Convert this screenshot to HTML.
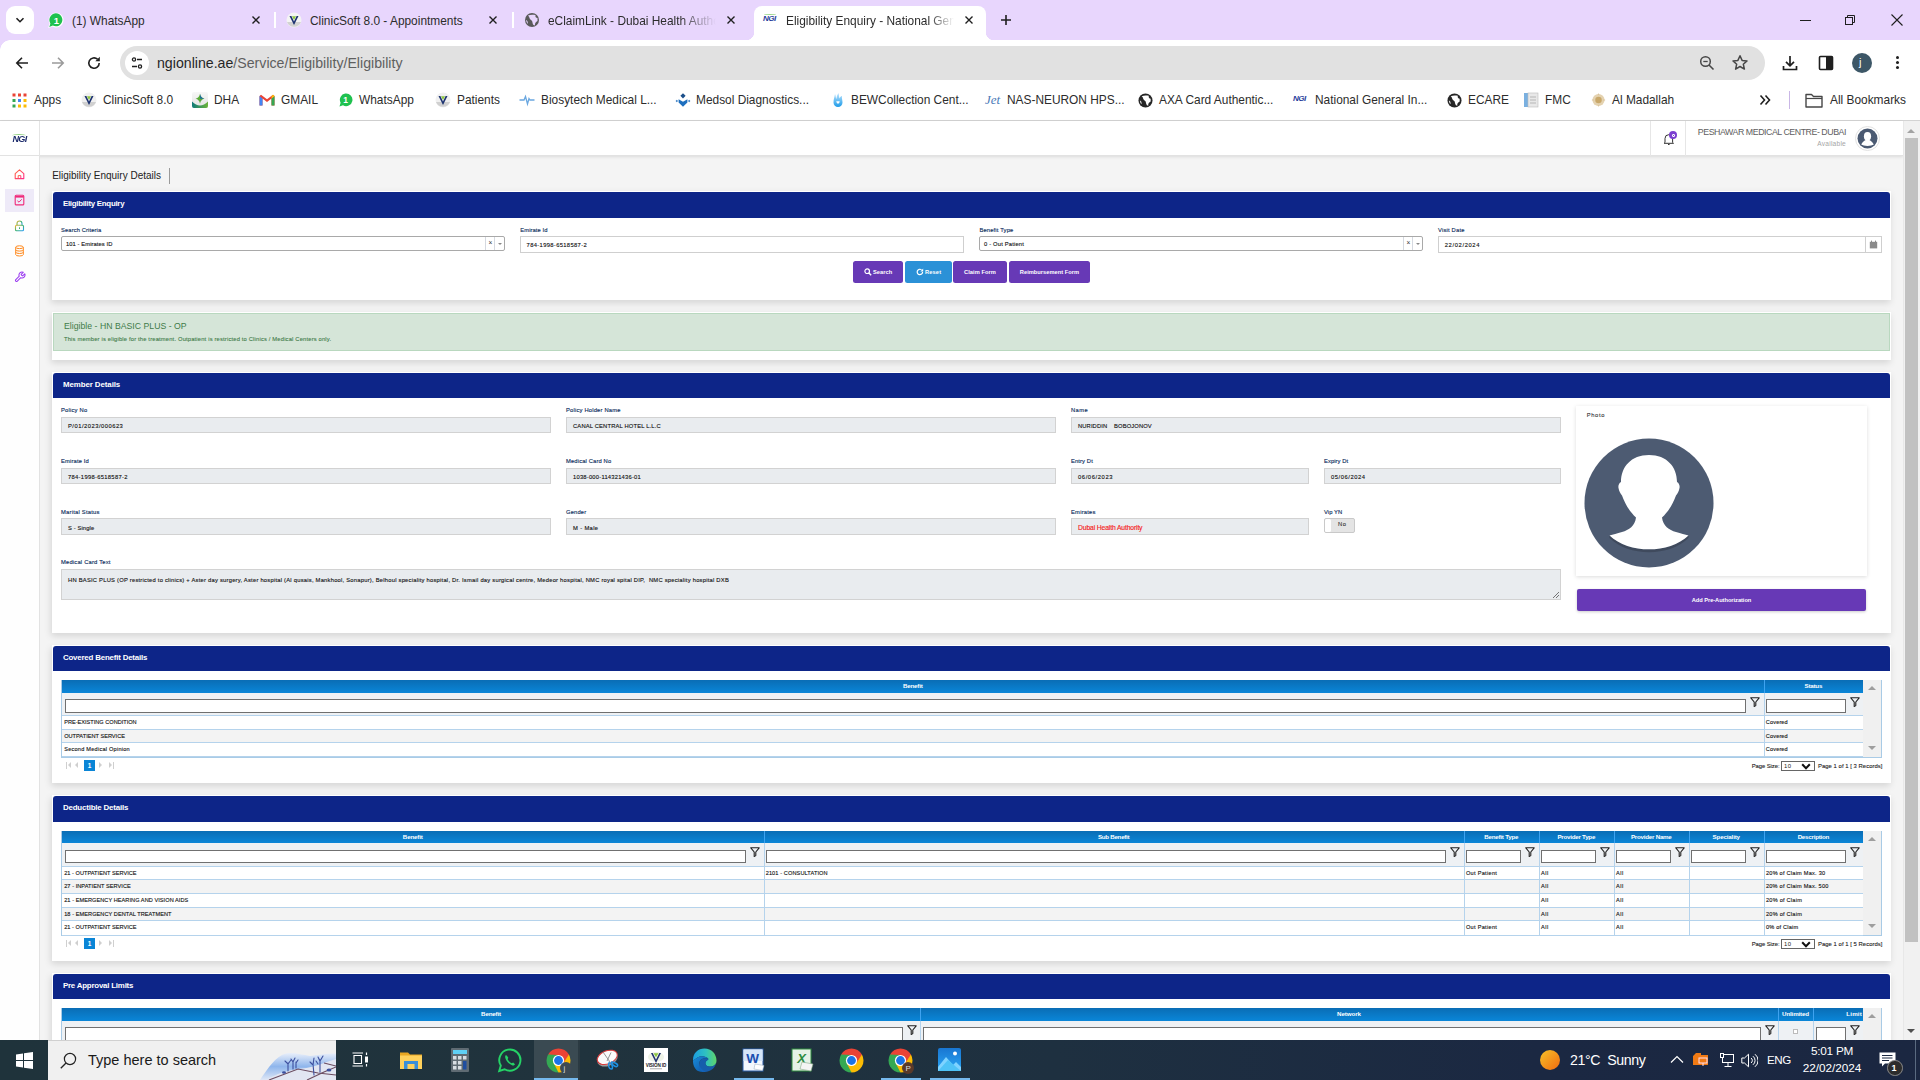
<!DOCTYPE html>
<html><head><meta charset="utf-8">
<style>
*{box-sizing:border-box;margin:0;padding:0}
html,body{width:1920px;height:1080px;overflow:hidden;background:#fff;font-family:"Liberation Sans",sans-serif;position:relative}
.a{position:absolute}
.t{position:absolute;white-space:nowrap;line-height:1}
.bmt{top:55px;font-size:11.9px;color:#2c2c2c}
/* browser chrome */
#tabbar{left:0;top:0;width:1920px;height:40px;background:#e8d6fd}
#toolbar{left:0;top:40px;width:1920px;height:80px;background:#fff}
#sep{left:0;top:120px;width:1920px;height:1px;background:#d3d3d3}
/* app */
#app{left:0;top:121px;width:1903px;height:919px;background:#f4f4f4;overflow:hidden}
#vscroll{left:1903px;top:121px;width:17px;height:919px;background:#f1f1f1}
#taskbar{left:0;top:1040px;width:1920px;height:40px;background:linear-gradient(90deg,#1f2d34 0%,#1f2c38 50%,#1c2640 100%)}
</style></head><body>
<div id="tabbar" class="a">
  <!-- dropdown -->
  <div class="a" style="left:6px;top:6px;width:28px;height:28px;border-radius:9px;background:#fff"></div>
  <svg class="a" style="left:14px;top:14px" width="12" height="12" viewBox="0 0 12 12"><path d="M2.5 4.2 L6 7.7 L9.5 4.2" fill="none" stroke="#1f1f1f" stroke-width="1.6"/></svg>
  <!-- tab 1 -->
  <svg class="a" style="left:47px;top:12px" width="17" height="17" viewBox="0 0 17 17"><path d="M1.2 16 L2.6 11.6 A7.4 7.4 0 1 1 5.6 14.6 Z" fill="#fff"/><path d="M2.3 14.9 L3.4 11.4 A6.5 6.5 0 1 1 5.8 13.6 Z" fill="#1fc14f"/><text x="9.4" y="11.8" font-family="Liberation Sans" font-weight="bold" font-size="9.5" fill="#fff" text-anchor="middle">1</text></svg>
  <div class="t" style="left:72px;top:16px;font-size:11.9px;color:#2c2c2c">(1) WhatsApp</div>
  <svg class="a" style="left:251px;top:15px" width="10" height="10" viewBox="0 0 10 10"><path d="M1.5 1.5 L8.5 8.5 M8.5 1.5 L1.5 8.5" stroke="#1f1f1f" stroke-width="1.4"/></svg>
  <div class="a" style="left:274px;top:12px;width:2px;height:16px;background:#fff"></div>
  <!-- tab 2 -->
  <svg class="a" style="left:286px;top:12px" width="16" height="16" viewBox="0 0 16 16"><circle cx="8" cy="8" r="7.5" fill="#f4f4f4"/><path d="M1 10 A7.5 7.5 0 0 0 15 10 Z" fill="#bbb" opacity=".6"/><path d="M3.5 4 L8 13 L12.5 4 L10.6 4 L8 9.5 L5.4 4 Z" fill="#1d3370"/><path d="M6 4.2 L10 4.2 L8 8 Z" fill="#8dc63f"/></svg>
  <div class="t" style="left:310px;top:16px;font-size:11.9px;color:#2c2c2c">ClinicSoft 8.0 - Appointments</div>
  <svg class="a" style="left:488px;top:15px" width="10" height="10" viewBox="0 0 10 10"><path d="M1.5 1.5 L8.5 8.5 M8.5 1.5 L1.5 8.5" stroke="#1f1f1f" stroke-width="1.4"/></svg>
  <div class="a" style="left:512px;top:12px;width:2px;height:16px;background:#fff"></div>
  <!-- tab 3 -->
  <svg class="a" style="left:524px;top:12px" width="16" height="16" viewBox="0 0 16 16"><circle cx="8" cy="8" r="7" fill="#5a5a5a"/><path d="M4 3.5 C6 5 5 7 7 8 C9 9 8 11 9.5 13 L11 13.5 C10.5 11 12 10 13.5 9 L13.5 6 C12 6 11 5 11.5 3 C9 2.5 6 2.5 4 3.5 Z M2 8 C3.5 8.5 4 10 3.8 12 A7 7 0 0 1 2 8 Z" fill="#e8d6fd"/></svg>
  <div class="t" style="left:548px;top:16px;font-size:11.9px;color:#2c2c2c;width:168px;overflow:hidden;-webkit-mask-image:linear-gradient(90deg,#000 78%,transparent 100%)">eClaimLink - Dubai Health Authority</div>
  <svg class="a" style="left:726px;top:15px" width="10" height="10" viewBox="0 0 10 10"><path d="M1.5 1.5 L8.5 8.5 M8.5 1.5 L1.5 8.5" stroke="#1f1f1f" stroke-width="1.4"/></svg>
  <!-- active tab -->
  <div class="a" style="left:754px;top:6px;width:232px;height:34px;background:#fff;border-radius:8px 8px 0 0"></div>
  <div class="a" style="left:746px;top:32px;width:8px;height:8px;background:radial-gradient(circle at 0 0,transparent 8px,#fff 8.5px)"></div>
  <div class="a" style="left:986px;top:32px;width:8px;height:8px;background:radial-gradient(circle at 100% 0,transparent 8px,#fff 8.5px)"></div>
  <div class="t" style="left:763px;top:15px;font-size:8px;font-weight:bold;font-style:italic;color:#1e3a9a;letter-spacing:-0.5px">NGI</div>
  <div class="a" style="left:764px;top:14px;width:12px;height:2px;border-top:1px solid #9fd98f;border-radius:50% 50% 0 0"></div>
  <div class="t" style="left:786px;top:16px;font-size:11.9px;color:#2c2c2c;width:168px;overflow:hidden;-webkit-mask-image:linear-gradient(90deg,#000 85%,transparent 100%)">Eligibility Enquiry - National General Insurance</div>
  <svg class="a" style="left:964px;top:15px" width="10" height="10" viewBox="0 0 10 10"><path d="M1.5 1.5 L8.5 8.5 M8.5 1.5 L1.5 8.5" stroke="#1f1f1f" stroke-width="1.4"/></svg>
  <!-- new tab -->
  <svg class="a" style="left:1000px;top:14px" width="12" height="12" viewBox="0 0 12 12"><path d="M6 1 V11 M1 6 H11" stroke="#1f1f1f" stroke-width="1.6"/></svg>
  <!-- window controls -->
  <div class="a" style="left:1800px;top:20px;width:11px;height:1px;background:#1f1f1f"></div>
  <svg class="a" style="left:1844px;top:14px" width="12" height="12" viewBox="0 0 12 12"><rect x="1.5" y="3.5" width="7" height="7" fill="none" stroke="#1f1f1f" stroke-width="1"/><path d="M3.5 3.5 V1.5 H10.5 V8.5 H8.5" fill="none" stroke="#1f1f1f" stroke-width="1"/></svg>
  <svg class="a" style="left:1891px;top:14px" width="12" height="12" viewBox="0 0 12 12"><path d="M0.5 0.5 L11.5 11.5 M11.5 0.5 L0.5 11.5" stroke="#1f1f1f" stroke-width="1.1"/></svg>
</div>
<div id="toolbar" class="a">
  <div class="a" style="left:0;top:0;width:10px;height:10px;background:radial-gradient(circle at 100% 100%,#fff 9.5px,#e8d6fd 10px)"></div>
  <svg class="a" style="left:14px;top:15px" width="16" height="16" viewBox="0 0 16 16"><path d="M14 8 H3 M8 2.8 L2.8 8 L8 13.2" fill="none" stroke="#1f1f1f" stroke-width="1.6"/></svg>
  <svg class="a" style="left:50px;top:15px" width="16" height="16" viewBox="0 0 16 16"><path d="M2 8 H13 M8 2.8 L13.2 8 L8 13.2" fill="none" stroke="#9b9b9b" stroke-width="1.6"/></svg>
  <svg class="a" style="left:86px;top:15px" width="16" height="16" viewBox="0 0 16 16"><path d="M13.2 8 A5.2 5.2 0 1 1 11.5 4.2" fill="none" stroke="#1f1f1f" stroke-width="1.6"/><path d="M13.8 1.8 V6.3 H9.3 Z" fill="#1f1f1f"/></svg>
  <!-- omnibox -->
  <div class="a" style="left:120px;top:6px;width:1645px;height:34px;border-radius:17px;background:#e1e1e1"></div>
  <div class="a" style="left:125px;top:11px;width:24px;height:24px;border-radius:50%;background:#fff"></div>
  <svg class="a" style="left:129px;top:15px" width="16" height="16" viewBox="0 0 16 16"><circle cx="5" cy="4.5" r="1.6" fill="none" stroke="#1f1f1f" stroke-width="1.3"/><path d="M8 4.5 H13" stroke="#1f1f1f" stroke-width="1.5"/><path d="M3 11.5 H8" stroke="#1f1f1f" stroke-width="1.5"/><circle cx="11" cy="11.5" r="1.6" fill="none" stroke="#1f1f1f" stroke-width="1.3"/></svg>
  <div class="t" style="left:157px;top:16px;font-size:14.16px;color:#262626">ngionline.ae<span style="color:#5f5f5f">/Service/Eligibility/Eligibility</span></div>
  <svg class="a" style="left:1699px;top:15px" width="16" height="16" viewBox="0 0 16 16"><circle cx="6.5" cy="6.5" r="4.8" fill="none" stroke="#474747" stroke-width="1.5"/><path d="M10 10 L14.5 14.5" stroke="#474747" stroke-width="1.6"/><path d="M4.3 6.5 H8.7" stroke="#474747" stroke-width="1.3"/></svg>
  <svg class="a" style="left:1731px;top:14px" width="18" height="18" viewBox="0 0 18 18"><path d="M9 1.8 L11.1 6.4 L16 6.9 L12.3 10.2 L13.4 15.1 L9 12.5 L4.6 15.1 L5.7 10.2 L2 6.9 L6.9 6.4 Z" fill="none" stroke="#474747" stroke-width="1.5" stroke-linejoin="round"/></svg>
  <svg class="a" style="left:1781px;top:14px" width="18" height="18" viewBox="0 0 18 18"><path d="M9 2 V11.5 M5 7.8 L9 11.8 L13 7.8" fill="none" stroke="#1f1f1f" stroke-width="1.7"/><path d="M2.5 12 V15.5 H15.5 V12" fill="none" stroke="#1f1f1f" stroke-width="1.7"/></svg>
  <svg class="a" style="left:1818px;top:15px" width="16" height="16" viewBox="0 0 16 16"><rect x="1.5" y="1.5" width="13" height="13" rx="1" fill="none" stroke="#1f1f1f" stroke-width="1.6"/><rect x="8" y="1.5" width="6.5" height="13" fill="#1f1f1f"/></svg>
  <div class="a" style="left:1852px;top:13px;width:20px;height:20px;border-radius:50%;background:#3d5767"></div>
  <div class="t" style="left:1859px;top:17px;font-size:11px;color:#fff">j</div>
  <div class="a" style="left:1896px;top:16px;width:3px;height:3px;border-radius:50%;background:#1f1f1f;box-shadow:0 5px 0 #1f1f1f,0 10px 0 #1f1f1f"></div>
  <!-- bookmarks -->
  <svg class="a" style="left:12px;top:53px" width="15" height="15" viewBox="0 0 15 15"><g>
   <rect x="0.5" y="0.5" width="3" height="3" fill="#ea4335"/><rect x="6" y="0.5" width="3" height="3" fill="#ea4335"/><rect x="11.5" y="0.5" width="3" height="3" fill="#ea4335"/>
   <rect x="0.5" y="6" width="3" height="3" fill="#34a853"/><rect x="6" y="6" width="3" height="3" fill="#4285f4"/><rect x="11.5" y="6" width="3" height="3" fill="#fbbc05"/>
   <rect x="0.5" y="11.5" width="3" height="3" fill="#34a853"/><rect x="6" y="11.5" width="3" height="3" fill="#fbbc05"/><rect x="11.5" y="11.5" width="3" height="3" fill="#fbbc05"/></g></svg>
  <div class="t bmt" style="left:34px">Apps</div>
  <svg class="a" style="left:81px;top:52px" width="16" height="16" viewBox="0 0 16 16"><circle cx="8" cy="8" r="7.5" fill="#f0f0f0"/><path d="M1 10 A7.5 7.5 0 0 0 15 10 Z" fill="#bbb" opacity=".6"/><path d="M3.5 4 L8 13 L12.5 4 L10.6 4 L8 9.5 L5.4 4 Z" fill="#1d3370"/><path d="M6 4.2 L10 4.2 L8 8 Z" fill="#8dc63f"/></svg>
  <div class="t bmt" style="left:103px">ClinicSoft 8.0</div>
  <svg class="a" style="left:192px;top:52px" width="16" height="16" viewBox="0 0 16 16"><defs><linearGradient id="dhb" x1="0" y1="0" x2="0" y2="1"><stop offset="0" stop-color="#f7f7f7"/><stop offset="1" stop-color="#e2e2e2"/></linearGradient><linearGradient id="dha" x1="0" y1="0" x2="1" y2="0"><stop offset="0" stop-color="#0f7a7a"/><stop offset="1" stop-color="#6db43a"/></linearGradient></defs><rect x="0" y="0" width="16" height="16" rx="2" fill="url(#dhb)"/><path d="M0 9.5 Q8 17.5 16 9.5 V14 Q16 16 14 16 H2 Q0 16 0 14 Z" fill="url(#dha)"/><path d="M8 1.8 Q8.6 5.6 12.4 6.8 Q8.6 7.6 8 11.8 Q7.4 7.6 3.6 6.8 Q7.4 5.6 8 1.8 Z" fill="#5aaa3a"/><path d="M8 1.8 Q8.6 5.6 12.4 6.8 L8 6.8 Z" fill="#1f6f9a"/></svg>
  <div class="t bmt" style="left:214px">DHA</div>
  <svg class="a" style="left:259px;top:54px" width="16" height="12" viewBox="0 0 16 12"><path d="M0.5 2 V11.5 H3.5 V4.5 L8 8 L12.5 4.5 V11.5 H15.5 V2 L14 0.8 L8 5.3 L2 0.8 Z" fill="#ea4335"/><path d="M0.5 2 V11.5 H3.5 V4.5 Z" fill="#4285f4"/><path d="M12.5 4.5 V11.5 H15.5 V2 Z" fill="#34a853"/><path d="M15.5 2 L14 0.8 L12.5 2 V4.5 L15.5 2.2 Z" fill="#fbbc05"/></svg>
  <div class="t bmt" style="left:281px">GMAIL</div>
  <svg class="a" style="left:337px;top:52px" width="16" height="16" viewBox="0 0 16 16"><path d="M2.5 14.5 L3.6 10.8 A6.3 6.3 0 1 1 6 13.3 Z" fill="#1fc14f"/><text x="8.6" y="11.2" font-family="Liberation Sans" font-weight="bold" font-size="8.5" fill="#fff" text-anchor="middle">1</text></svg>
  <div class="t bmt" style="left:359px">WhatsApp</div>
  <svg class="a" style="left:435px;top:52px" width="16" height="16" viewBox="0 0 16 16"><circle cx="8" cy="8" r="7.5" fill="#f0f0f0"/><path d="M1 10 A7.5 7.5 0 0 0 15 10 Z" fill="#bbb" opacity=".6"/><path d="M3.5 4 L8 13 L12.5 4 L10.6 4 L8 9.5 L5.4 4 Z" fill="#1d3370"/><path d="M6 4.2 L10 4.2 L8 8 Z" fill="#8dc63f"/></svg>
  <div class="t bmt" style="left:457px">Patients</div>
  <svg class="a" style="left:519px;top:53px" width="16" height="14" viewBox="0 0 16 14"><path d="M0.5 7 H5 L6.5 3.5 L8.5 11 L10 5.5 L11 7 H15.5" fill="none" stroke="#6aa7e0" stroke-width="1.3"/></svg>
  <div class="t bmt" style="left:541px">Biosytech Medical L...</div>
  <svg class="a" style="left:675px;top:52px" width="16" height="16" viewBox="0 0 16 16"><path d="M8 1.2 L10.6 3.8 L8 6.4 L5.4 3.8 Z" fill="#1b4f8a"/><path d="M3.6 7.2 L8 9.8 L12.4 7.2 L12.4 10.6 L8 14.8 L3.6 10.6 Z" fill="#1e6fbf"/><path d="M0.6 9 L1.8 7.8 L3 9 L1.8 10.2 Z M13 9 L14.2 7.8 L15.4 9 L14.2 10.2 Z" fill="#3a7fc4"/></svg>
  <div class="t bmt" style="left:696px">Medsol Diagnostics...</div>
  <svg class="a" style="left:831px;top:52px" width="15" height="16" viewBox="0 0 15 16"><defs><linearGradient id="bew" x1="0" y1="0" x2="0" y2="1"><stop offset="0" stop-color="#bfe6ff"/><stop offset="1" stop-color="#1e9be8"/></linearGradient></defs><path d="M4 2 C5 4 4.5 6 5.5 7 C5.5 4 6.5 2.5 7.5 1 C8 3 8 5 8.5 6.5 C9 5 10 4 11 4 C10.5 6 11.5 8 11.5 10.5 A4.5 4.5 0 0 1 2.5 10.5 C2.5 7.5 3.5 5 4 2 Z" fill="url(#bew)"/><path d="M5.2 10 A1.1 1.1 0 0 1 7 9.6 A1.1 1.1 0 0 1 8.8 10 L7 12 Z" fill="#fff"/></svg>
  <div class="t bmt" style="left:851px">BEWCollection Cent...</div>
  <div class="t" style="left:985px;top:53px;font-family:'Liberation Serif',serif;font-style:italic;font-size:13px;color:#4a7ab8">Jet</div>
  <div class="t bmt" style="left:1007px">NAS-NEURON HPS...</div>
  <svg class="a globe" style="left:1138px;top:53px" width="15" height="15" viewBox="0 0 16 16"><circle cx="8" cy="8" r="7.5" fill="#262626"/><path d="M4 3.5 C6 5 5 7 7 8 C9 9 8 11 9.5 13 L11 13.5 C10.5 11 12 10 13.5 9 L13.5 6 C12 6 11 5 11.5 3 C9 2.5 6 2.5 4 3.5 Z M2 8 C3.5 8.5 4 10 3.8 12 A7 7 0 0 1 2 8 Z" fill="#fff"/></svg>
  <div class="t bmt" style="left:1159px">AXA Card Authentic...</div>
  <div class="t" style="left:1293px;top:55px;font-size:8px;font-weight:bold;font-style:italic;color:#1e3a9a;letter-spacing:-0.5px">NGI</div>
  <div class="t bmt" style="left:1315px">National General In...</div>
  <svg class="a globe" style="left:1447px;top:53px" width="15" height="15" viewBox="0 0 16 16"><circle cx="8" cy="8" r="7.5" fill="#262626"/><path d="M4 3.5 C6 5 5 7 7 8 C9 9 8 11 9.5 13 L11 13.5 C10.5 11 12 10 13.5 9 L13.5 6 C12 6 11 5 11.5 3 C9 2.5 6 2.5 4 3.5 Z M2 8 C3.5 8.5 4 10 3.8 12 A7 7 0 0 1 2 8 Z" fill="#fff"/></svg>
  <div class="t bmt" style="left:1468px">ECARE</div>
  <svg class="a" style="left:1523px;top:52px" width="16" height="16" viewBox="0 0 16 16"><rect x="1" y="1" width="4" height="14" fill="#7ab0e0"/><rect x="5" y="1" width="10" height="14" fill="#e8e8e8" stroke="#bbb" stroke-width=".6"/><path d="M7 5 H13 M7 8 H13 M7 11 H13" stroke="#aaa" stroke-width=".8"/></svg>
  <div class="t bmt" style="left:1545px">FMC</div>
  <svg class="a" style="left:1591px;top:52px" width="15" height="16" viewBox="0 0 16 16"><circle cx="8" cy="8" r="6.5" fill="#e4d2b0"/><circle cx="8" cy="8" r="3.5" fill="#c9a86a"/><path d="M8 0.5 L9 3 L8 2.5 L7 3 Z M8 15.5 L9 13 L8 13.5 L7 13 Z M0.5 8 L3 9 L2.5 8 L3 7 Z M15.5 8 L13 9 L13.5 8 L13 7 Z" fill="#d9c29a"/></svg>
  <div class="t bmt" style="left:1612px">Al Madallah</div>
  <svg class="a" style="left:1759px;top:54px" width="12" height="12" viewBox="0 0 12 12"><path d="M1.5 1.5 L5.5 6 L1.5 10.5 M6.5 1.5 L10.5 6 L6.5 10.5" fill="none" stroke="#1f1f1f" stroke-width="1.6"/></svg>
  <div class="a" style="left:1789px;top:51px;width:1px;height:18px;background:#c9b6e6"></div>
  <svg class="a" style="left:1805px;top:53px" width="18" height="15" viewBox="0 0 18 15"><path d="M1 1.5 H6.5 L8.5 3.5 H17 V14 H1 Z" fill="none" stroke="#474747" stroke-width="1.4" stroke-linejoin="round"/><path d="M1 5.5 H17" stroke="#474747" stroke-width="1.2"/></svg>
  <div class="t bmt" style="left:1830px">All Bookmarks</div>
</div>
<div id="sep" class="a"></div>
<!--APP-->
<div class="a" style="left:0px;top:121px;width:1903px;height:919px;background:#f4f4f4"></div>
<div class="a" style="left:0px;top:121px;width:1903px;height:35px;background:#fff;box-shadow:0 1px 3px rgba(0,0,0,.10);border-bottom:1px solid #e2e2e2"></div>
<div class="a" style="left:0px;top:156px;width:40px;height:884px;background:#fefefe;border-right:1px solid #e2e2e2"></div>
<div class="a" style="left:39px;top:121px;width:1px;height:35px;background:#e4e4e4"></div>
<div class="t" style="left:11.5px;top:134px;font-size:9.5px;font-weight:bold;font-style:italic;color:#1b2a6b;letter-spacing:-0.6px;transform:scaleX(0.95)">NGI</div>
<div class="a" style="left:12px;top:134px;width:14px;height:3px;border-top:1px solid #8fd07f;border-radius:50% 50% 0 0"></div>
<div class="a" style="left:1650px;top:121px;width:1px;height:35px;background:#e6e6e6"></div>
<div class="a" style="left:1685px;top:121px;width:1px;height:35px;background:#e6e6e6"></div>
<svg class="a" style="left:1662px;top:132px" width="14" height="14" viewBox="0 0 14 14"><path d="M3 10.5 V6.5 A3.8 3.8 0 0 1 10.6 6.5 V10.5 L11.5 11.3 H2.1 Z" fill="none" stroke="#333" stroke-width="1"/><path d="M6 12.5 H7.6" stroke="#333" stroke-width="1"/></svg>
<div class="a" style="left:1669px;top:131px;width:8px;height:8px;border-radius:50%;background:#7b3fd0"></div>
<div class="a" style="left:1671.5px;top:133.5px;width:3px;height:3px;border:0.8px solid #fff;border-radius:1px"></div>
<div class="t" style="left:1246px;width:600px;text-align:right;top:127.90px;font-size:8.8px;letter-spacing:-0.453px;color:#5e5e5e">PESHAWAR MEDICAL CENTRE- DUBAI</div>
<div class="t" style="left:1246px;width:600px;text-align:right;top:141.16px;font-size:6.6px;letter-spacing:0.233px;color:#a5a5a5">Available</div>
<div class="a" style="left:1855px;top:126px;width:25px;height:25px;border-radius:50%;border:1px solid #e2e2e2;background:#fff"></div>
<svg class="a" style="left:1857px;top:128px" width="21" height="21" viewBox="0 0 21 21"><circle cx="10.5" cy="10.5" r="10" fill="#4b5a72"/><ellipse cx="10.5" cy="8.3" rx="3.6" ry="4.4" fill="#fff"/><path d="M4.2 16.5 C5.5 13.5 7.5 12.8 8.8 12 L12.2 12 C13.5 12.8 15.5 13.5 16.8 16.5 C14 18.4 7 18.4 4.2 16.5 Z" fill="#fff"/></svg>
<svg class="a" style="left:14px;top:169px" width="11" height="11" viewBox="0 0 11 11"><defs><linearGradient id="gh" x1="0" y1="0" x2="1" y2="1"><stop offset="0" stop-color="#ff6a3d"/><stop offset="1" stop-color="#ff2d87"/></linearGradient></defs><path d="M1.2 4.6 L5.5 0.9 L9.8 4.6 V9.6 H1.2 Z" fill="none" stroke="url(#gh)" stroke-width="1.1" stroke-linejoin="round"/><path d="M4.2 9.6 V6.6 H6.8 V9.6" fill="none" stroke="url(#gh)" stroke-width="1"/></svg>
<div class="a" style="left:5px;top:189px;width:29px;height:23px;background:#eeeaf8"></div>
<svg class="a" style="left:14px;top:194px" width="11" height="12" viewBox="0 0 11 12"><rect x="1.2" y="1.3" width="8.6" height="9.6" rx="1" fill="none" stroke="#ef2a7a" stroke-width="1.1"/><path d="M1.2 2.8 H9.8" stroke="#ef2a7a" stroke-width="1.6"/><path d="M3.4 6.8 L5 8.2 L7.7 5.3" fill="none" stroke="#ef2a7a" stroke-width="1"/></svg>
<svg class="a" style="left:14px;top:220px" width="11" height="12" viewBox="0 0 11 12"><defs><linearGradient id="gl" x1="0" y1="0" x2="1" y2="1"><stop offset="0" stop-color="#f7b733"/><stop offset=".5" stop-color="#3cb371"/><stop offset="1" stop-color="#2a9df4"/></linearGradient></defs><path d="M3 5.2 V3.5 A2.5 2.5 0 0 1 8 3.5 V5.2" fill="none" stroke="url(#gl)" stroke-width="1.1"/><rect x="1.5" y="5.2" width="8" height="5.6" rx="1" fill="none" stroke="url(#gl)" stroke-width="1.1"/><path d="M5.5 7.3 V9" stroke="#3cb371" stroke-width="1"/></svg>
<svg class="a" style="left:14px;top:245px" width="11" height="12" viewBox="0 0 11 12"><g fill="none" stroke="#ff8a1f" stroke-width="1"><ellipse cx="5.5" cy="2.2" rx="3.8" ry="1.4"/><path d="M1.7 2.2 V9.6 A3.8 1.4 0 0 0 9.3 9.6 V2.2"/><path d="M1.7 4.7 A3.8 1.4 0 0 0 9.3 4.7 M1.7 7.1 A3.8 1.4 0 0 0 9.3 7.1"/></g></svg>
<svg class="a" style="left:13.5px;top:271px" width="12" height="12" viewBox="0 0 24 24"><path d="M14.7 6.3a1 1 0 0 0 0 1.4l1.6 1.6a1 1 0 0 0 1.4 0l3.77-3.77a6 6 0 0 1-7.94 7.94l-6.91 6.91a2.12 2.12 0 0 1-3-3l6.91-6.91a6 6 0 0 1 7.94-7.94l-3.76 3.76z" fill="none" stroke="#9b3df0" stroke-width="2.1" stroke-linejoin="round"/></svg>
<div class="t" style="left:52.2px;top:170.59px;font-size:9.99px;color:#222">Eligibility Enquiry Details</div>
<div class="a" style="left:169px;top:168px;width:1px;height:16px;background:#9a9a9a"></div>
<div class="a" style="left:52px;top:191px;width:1839px;height:109px;background:#fff;box-shadow:-1px 3px 7px rgba(0,0,0,.13)"></div>
<div class="a" style="left:53px;top:192px;width:1837px;height:26px;background:#0d2588;border-radius:3px 3px 0 0"></div>
<div class="t" style="left:62.9px;top:200.36px;font-size:7.9px;font-weight:bold;letter-spacing:-0.277px;color:#fff">Eligibility Enquiry</div>
<div class="t" style="left:61px;top:227.94px;font-size:5.8px;letter-spacing:0.113px;color:#0b2d5c;-webkit-text-stroke:0.14px #0b2d5c">Search Criteria</div>
<div class="t" style="left:520.3px;top:227.94px;font-size:5.8px;letter-spacing:0.081px;color:#0b2d5c;-webkit-text-stroke:0.14px #0b2d5c">Emirate Id</div>
<div class="t" style="left:979.4px;top:227.94px;font-size:5.8px;letter-spacing:0.157px;color:#0b2d5c;-webkit-text-stroke:0.14px #0b2d5c">Benefit Type</div>
<div class="t" style="left:1438px;top:227.94px;font-size:5.8px;letter-spacing:0.194px;color:#0b2d5c;-webkit-text-stroke:0.14px #0b2d5c">Visit Date</div>
<div class="a" style="left:61px;top:236px;width:444px;height:15px;background:#fff;border:1px solid #a9a9a9;border-radius:2px"></div>
<div class="a" style="left:485px;top:237px;width:1px;height:13px;background:#d5d9e0"></div>
<div class="a" style="left:494px;top:237px;width:1px;height:13px;background:#d5d9e0"></div>
<div class="t" style="left:488.4px;top:240px;font-size:6.6px;color:#333">&#215;</div>
<div class="a" style="left:497.5px;top:242.5px;width:0;height:0;border-left:2.5px solid transparent;border-right:2.5px solid transparent;border-top:2.5px solid #888"></div>
<div class="t" style="left:66px;top:241.84px;font-size:5.8px;letter-spacing:0.077px;color:#111;-webkit-text-stroke:0.12px #111">101 - Emirates ID</div>
<div class="a" style="left:520px;top:236px;width:444px;height:17px;background:#fff;border:1px solid #cfcfcf"></div>
<div class="t" style="left:526.6px;top:242.94px;font-size:5.8px;letter-spacing:0.346px;color:#111;-webkit-text-stroke:0.12px #111">784-1998-6518587-2</div>
<div class="a" style="left:979px;top:236px;width:444px;height:15px;background:#fff;border:1px solid #a9a9a9;border-radius:2px"></div>
<div class="a" style="left:1403px;top:237px;width:1px;height:13px;background:#d5d9e0"></div>
<div class="a" style="left:1412px;top:237px;width:1px;height:13px;background:#d5d9e0"></div>
<div class="t" style="left:1406.4px;top:240px;font-size:6.6px;color:#333">&#215;</div>
<div class="a" style="left:1415.5px;top:242.5px;width:0;height:0;border-left:2.5px solid transparent;border-right:2.5px solid transparent;border-top:2.5px solid #888"></div>
<div class="t" style="left:984px;top:241.84px;font-size:5.8px;letter-spacing:0.176px;color:#111;-webkit-text-stroke:0.12px #111">0 - Out Patient</div>
<div class="a" style="left:1438px;top:236px;width:444px;height:17px;background:#fff;border:1px solid #cfcfcf"></div>
<div class="a" style="left:1865px;top:236px;width:17px;height:17px;border-left:1px solid #cfcfcf"></div>
<div class="t" style="left:1444.7px;top:242.94px;font-size:5.8px;letter-spacing:0.637px;color:#111;-webkit-text-stroke:0.12px #111">22/02/2024</div>
<svg class="a" style="left:1869px;top:240px" width="9" height="9" viewBox="0 0 9 9"><rect x="0.8" y="1.8" width="7.4" height="6.6" fill="#8a8a8a"/><rect x="2" y="0.6" width="1" height="2" fill="#8a8a8a"/><rect x="6" y="0.6" width="1" height="2" fill="#8a8a8a"/></svg>
<div class="a" style="left:853px;top:261px;width:50px;height:22px;background:#6739b6;border-radius:2.5px"></div>
<div class="t" style="left:873px;top:269.77px;font-size:5.7px;font-weight:bold;letter-spacing:0.069px;color:#fff">Search</div>
<svg class="a" style="left:864px;top:268px" width="8" height="8" viewBox="0 0 8 8"><circle cx="3.2" cy="3.2" r="2.3" fill="none" stroke="#fff" stroke-width="1.2"/><path d="M4.9 4.9 L7.2 7.2" stroke="#fff" stroke-width="1.4"/></svg>
<div class="a" style="left:905px;top:261px;width:47px;height:22px;background:#2b91d7;border-radius:2.5px"></div>
<div class="t" style="left:925px;top:269.77px;font-size:5.7px;font-weight:bold;letter-spacing:0.133px;color:#fff">Reset</div>
<svg class="a" style="left:915.5px;top:268px" width="8" height="8" viewBox="0 0 8 8"><path d="M6.6 4 A2.7 2.7 0 1 1 5.5 1.8" fill="none" stroke="#fff" stroke-width="1.2"/><path d="M7.2 0.6 V3.4 H4.4 Z" fill="#fff"/></svg>
<div class="a" style="left:953px;top:261px;width:54px;height:22px;background:#6739b6;border-radius:2.5px"></div>
<div class="t" style="left:680.0px;width:600px;text-align:center;top:269.77px;font-size:5.7px;font-weight:bold;letter-spacing:0.067px;color:#fff">Claim Form</div>
<div class="a" style="left:1009px;top:261px;width:81px;height:22px;background:#6739b6;border-radius:2.5px"></div>
<div class="t" style="left:749.5px;width:600px;text-align:center;top:269.77px;font-size:5.7px;font-weight:bold;letter-spacing:0.026px;color:#fff">Reimbursement Form</div>
<div class="a" style="left:52px;top:312px;width:1839px;height:48px;background:#fff;box-shadow:-1px 3px 7px rgba(0,0,0,.13)"></div>
<div class="a" style="left:53px;top:313px;width:1837px;height:38px;background:#d5e5d8;border:1px solid #b9d8bf"></div>
<div class="t" style="left:64px;top:321.60px;font-size:8.68px;letter-spacing:0.023px;color:#3f7b48">Eligible - HN BASIC PLUS - OP</div>
<div class="t" style="left:64px;top:337.04px;font-size:5.8px;letter-spacing:0.170px;color:#3f7b48;-webkit-text-stroke:0.1px #3f7b48">This member is eligible for the treatment. Outpatient is restricted to Clinics / Medical Centers only.</div>
<div class="a" style="left:52px;top:372px;width:1839px;height:261px;background:#fff;box-shadow:-1px 3px 7px rgba(0,0,0,.13)"></div>
<div class="a" style="left:53px;top:373px;width:1837px;height:25px;background:#0d2588;border-radius:3px 3px 0 0"></div>
<div class="t" style="left:62.9px;top:381.36px;font-size:7.9px;font-weight:bold;letter-spacing:-0.074px;color:#fff">Member Details</div>
<div class="t" style="left:61px;top:407.94px;font-size:5.8px;letter-spacing:0.208px;color:#0b2d5c;-webkit-text-stroke:0.14px #0b2d5c">Policy No</div>
<div class="a" style="left:61px;top:417px;width:490px;height:16px;background:#e9ecef;border:1px solid #d2d2d2"></div>
<div class="t" style="left:68px;top:423.54px;font-size:5.8px;letter-spacing:0.497px;color:#111;-webkit-text-stroke:0.12px #111">P/01/2023/000623</div>
<div class="t" style="left:566px;top:407.94px;font-size:5.8px;letter-spacing:0.189px;color:#0b2d5c;-webkit-text-stroke:0.14px #0b2d5c">Policy Holder Name</div>
<div class="a" style="left:566px;top:417px;width:490px;height:16px;background:#e9ecef;border:1px solid #d2d2d2"></div>
<div class="t" style="left:573px;top:423.54px;font-size:5.8px;letter-spacing:0.165px;color:#111;-webkit-text-stroke:0.12px #111">CANAL CENTRAL HOTEL L.L.C</div>
<div class="t" style="left:1071px;top:407.94px;font-size:5.8px;letter-spacing:0.431px;color:#0b2d5c;-webkit-text-stroke:0.14px #0b2d5c">Name</div>
<div class="a" style="left:1071px;top:417px;width:490px;height:16px;background:#e9ecef;border:1px solid #d2d2d2"></div>
<div class="t" style="left:1078px;top:423.54px;font-size:5.8px;letter-spacing:0.111px;color:#111;-webkit-text-stroke:0.12px #111">NURIDDIN &nbsp;&nbsp; BOBOJONOV</div>
<div class="t" style="left:61px;top:458.94px;font-size:5.8px;letter-spacing:0.148px;color:#0b2d5c;-webkit-text-stroke:0.14px #0b2d5c">Emirate Id</div>
<div class="a" style="left:61px;top:468px;width:490px;height:16px;background:#e9ecef;border:1px solid #d2d2d2"></div>
<div class="t" style="left:68px;top:474.54px;font-size:5.8px;letter-spacing:0.311px;color:#111;-webkit-text-stroke:0.12px #111">784-1998-6518587-2</div>
<div class="t" style="left:566px;top:458.94px;font-size:5.8px;letter-spacing:0.141px;color:#0b2d5c;-webkit-text-stroke:0.14px #0b2d5c">Medical Card No</div>
<div class="a" style="left:566px;top:468px;width:490px;height:16px;background:#e9ecef;border:1px solid #d2d2d2"></div>
<div class="t" style="left:573px;top:474.54px;font-size:5.8px;letter-spacing:0.217px;color:#111;-webkit-text-stroke:0.12px #111">1038-000-114321436-01</div>
<div class="t" style="left:1071px;top:458.94px;font-size:5.8px;letter-spacing:0.116px;color:#0b2d5c;-webkit-text-stroke:0.14px #0b2d5c">Entry Dt</div>
<div class="a" style="left:1071px;top:468px;width:238px;height:16px;background:#e9ecef;border:1px solid #d2d2d2"></div>
<div class="t" style="left:1078px;top:474.54px;font-size:5.8px;letter-spacing:0.604px;color:#111;-webkit-text-stroke:0.12px #111">06/06/2023</div>
<div class="t" style="left:1324px;top:458.94px;font-size:5.8px;letter-spacing:0.080px;color:#0b2d5c;-webkit-text-stroke:0.14px #0b2d5c">Expiry Dt</div>
<div class="a" style="left:1324px;top:468px;width:237px;height:16px;background:#e9ecef;border:1px solid #d2d2d2"></div>
<div class="t" style="left:1331px;top:474.54px;font-size:5.8px;letter-spacing:0.559px;color:#111;-webkit-text-stroke:0.12px #111">05/06/2024</div>
<div class="t" style="left:61px;top:509.84px;font-size:5.8px;letter-spacing:0.231px;color:#0b2d5c;-webkit-text-stroke:0.14px #0b2d5c">Marital Status</div>
<div class="a" style="left:61px;top:518px;width:490px;height:17px;background:#e9ecef;border:1px solid #d2d2d2"></div>
<div class="t" style="left:68px;top:525.54px;font-size:5.8px;letter-spacing:0.113px;color:#111;-webkit-text-stroke:0.12px #111">S - Single</div>
<div class="t" style="left:566px;top:509.84px;font-size:5.8px;letter-spacing:0.164px;color:#0b2d5c;-webkit-text-stroke:0.14px #0b2d5c">Gender</div>
<div class="a" style="left:566px;top:518px;width:490px;height:17px;background:#e9ecef;border:1px solid #d2d2d2"></div>
<div class="t" style="left:573px;top:525.54px;font-size:5.8px;letter-spacing:0.358px;color:#111;-webkit-text-stroke:0.12px #111">M - Male</div>
<div class="t" style="left:1071px;top:509.84px;font-size:5.8px;letter-spacing:0.226px;color:#0b2d5c;-webkit-text-stroke:0.14px #0b2d5c">Emirates</div>
<div class="a" style="left:1071px;top:518px;width:238px;height:17px;background:#e9ecef;border:1px solid #d2d2d2"></div>
<div class="t" style="left:1078px;top:524.79px;font-size:6.8px;letter-spacing:-0.148px;color:#f51d1d;-webkit-text-stroke:0.15px #f51d1d">Dubai Health Authority</div>
<div class="t" style="left:1324px;top:509.94px;font-size:5.8px;letter-spacing:0.064px;color:#0b2d5c;-webkit-text-stroke:0.14px #0b2d5c">Vip YN</div>
<div class="a" style="left:1324px;top:518px;width:31px;height:15px;background:#e4e4e4;border:1px solid #c9c9c9;border-radius:2px"></div>
<div class="a" style="left:1325px;top:519px;width:6px;height:13px;background:#fff;border-radius:1.5px"></div>
<div class="t" style="left:1338px;top:521.74px;font-size:5.8px;letter-spacing:0.549px;color:#333;-webkit-text-stroke:0.1px #333">No</div>
<div class="t" style="left:61px;top:559.94px;font-size:5.8px;letter-spacing:0.197px;color:#0b2d5c;-webkit-text-stroke:0.14px #0b2d5c">Medical Card Text</div>
<div class="a" style="left:61px;top:569px;width:1500px;height:31px;background:#e9ecef;border:1px solid #d2d2d2"></div>
<div class="t" style="left:68px;top:577.94px;font-size:5.8px;letter-spacing:0.234px;color:#111;-webkit-text-stroke:0.12px #111">HN BASIC PLUS (OP restricted to clinics) + Aster day surgery, Aster hospital (Al qusais, Mankhool, Sonapur), Belhoul speciality hospital, Dr. Ismail day surgical centre, Medeor hospital, NMC royal spital DIP, &nbsp;NMC speciality hospital DXB</div>
<svg class="a" style="left:1550px;top:589px" width="10" height="10" viewBox="0 0 10 10"><path d="M9 3 L3 9 M9 6 L6 9" stroke="#555" stroke-width=".8"/></svg>
<div class="a" style="left:1576px;top:406px;width:291px;height:170px;background:#fff;box-shadow:0 1px 4px rgba(0,0,0,.14)"></div>
<div class="t" style="left:1586.7px;top:413.44px;font-size:5.8px;letter-spacing:0.652px;color:#333;-webkit-text-stroke:0.1px #333">Photo</div>
<svg class="a" style="left:1584px;top:438px" width="130" height="130" viewBox="0 0 130 130"><circle cx="65" cy="65" r="64.5" fill="#4d5b72"/><path d="M25.5 97.4 C45 116 85 116 104.5 97.4 L104.5 100 C85 119 45 119 25.5 100 Z" fill="#3f4a5d"/><path d="M65 17 C47 17 37 29 37 44 C35 45 34 47.5 34.5 50 C35 53 36.5 55.5 38 57.5 C41 66 46 74 52 79.5 C51 88 45 92 38 94 C33 95.5 29 96.5 25.5 97.4 C45 116 85 116 104.5 97.4 C101 96.5 97 95.5 92 94 C85 92 79 88 78 79.5 C84 74 89 66 92 57.5 C93.5 55.5 95 53 95.5 50 C96 47.5 95 45 93 44 C93 29 83 17 65 17 Z" fill="#fff"/></svg>
<div class="a" style="left:1577px;top:589px;width:289px;height:22px;background:#6739b6;border-radius:2px;box-shadow:0 1px 3px rgba(0,0,0,.2)"></div>
<div class="t" style="left:1421.5px;width:600px;text-align:center;top:598.02px;font-size:5.7px;font-weight:bold;letter-spacing:-0.036px;color:#fff">Add Pre-Authorization</div>
<div class="a" style="left:52px;top:645px;width:1839px;height:138px;background:#fff;box-shadow:-1px 3px 7px rgba(0,0,0,.13)"></div>
<div class="a" style="left:53px;top:646px;width:1837px;height:25px;background:#0d2588;border-radius:3px 3px 0 0"></div>
<div class="t" style="left:62.9px;top:654.36px;font-size:7.9px;font-weight:bold;letter-spacing:-0.184px;color:#fff">Covered Benefit Details</div>
<div class="a" style="left:61px;top:679.5px;width:1821px;height:78.10000000000002px;background:#fff;border:1px solid #a9cbe6"></div>
<div class="a" style="left:62px;top:680.0px;width:1801px;height:13.0px;background:linear-gradient(#0a6db5,#0a86d8)"></div>
<div class="a" style="left:62px;top:693px;width:1801px;height:22.5px;background:#eef1f4"></div>
<div class="a" style="left:1863px;top:680.0px;width:18px;height:76.60000000000002px;background:#f0f0f0"></div>
<div class="a" style="left:1868px;top:685.5px;width:0;height:0;border-left:4px solid transparent;border-right:4px solid transparent;border-bottom:4px solid #9e9e9e"></div>
<div class="a" style="left:1868px;top:745.6px;width:0;height:0;border-left:4px solid transparent;border-right:4px solid transparent;border-top:4px solid #9e9e9e"></div>
<div class="a" style="left:1763.6px;top:680.0px;width:1.0px;height:13.0px;background:#3fa3f0"></div>
<div class="a" style="left:1763.6px;top:693px;width:1.0px;height:63.60000000000002px;background:#b5d3ec"></div>
<div class="t" style="left:612.8px;width:600px;text-align:center;top:683.30px;font-size:6.2px;font-weight:bold;letter-spacing:-0.170px;color:#fff">Benefit</div>
<div class="t" style="left:1513.3px;width:600px;text-align:center;top:683.30px;font-size:6.2px;font-weight:bold;letter-spacing:-0.211px;color:#fff">Status</div>
<div class="a" style="left:65px;top:699.4px;width:1681px;height:13.300000000000068px;background:#fff;border:1px solid #707070"></div>
<svg class="a" style="left:1750px;top:697px" width="10" height="10" viewBox="0 0 10 10"><path d="M0.8 0.8 H9.2 L5.8 5 V8.6 L4.2 9.4 V5 Z" fill="none" stroke="#222" stroke-width="1.1" stroke-linejoin="round"/><path d="M4.3 5.5 L5.7 5.5 L5.6 8.8 L4.4 9.3 Z" fill="#555"/></svg>
<div class="a" style="left:1766px;top:699.4px;width:80px;height:13.300000000000068px;background:#fff;border:1px solid #707070"></div>
<svg class="a" style="left:1850px;top:697px" width="10" height="10" viewBox="0 0 10 10"><path d="M0.8 0.8 H9.2 L5.8 5 V8.6 L4.2 9.4 V5 Z" fill="none" stroke="#222" stroke-width="1.1" stroke-linejoin="round"/><path d="M4.3 5.5 L5.7 5.5 L5.6 8.8 L4.4 9.3 Z" fill="#555"/></svg>
<div class="a" style="left:62px;top:715.5px;width:1801px;height:13.799999999999955px;background:#fff"></div>
<div class="t" style="left:64.2px;top:720.21px;font-size:5.6px;letter-spacing:0.003px;color:#111;-webkit-text-stroke:0.12px #111">PRE-EXISTING CONDITION</div>
<div class="t" style="left:1765.8px;top:720.21px;font-size:5.6px;letter-spacing:0.130px;color:#111;-webkit-text-stroke:0.12px #111">Covered</div>
<div class="a" style="left:62px;top:729.3px;width:1801px;height:13.200000000000045px;background:#f3f3f3"></div>
<div class="t" style="left:64.2px;top:734.01px;font-size:5.6px;letter-spacing:0.016px;color:#111;-webkit-text-stroke:0.12px #111">OUTPATIENT SERVICE</div>
<div class="t" style="left:1765.8px;top:734.01px;font-size:5.6px;letter-spacing:0.130px;color:#111;-webkit-text-stroke:0.12px #111">Covered</div>
<div class="a" style="left:62px;top:742.5px;width:1801px;height:14.100000000000023px;background:#fff"></div>
<div class="t" style="left:64.2px;top:747.21px;font-size:5.6px;letter-spacing:0.231px;color:#111;-webkit-text-stroke:0.12px #111">Second Medical Opinion</div>
<div class="t" style="left:1765.8px;top:747.21px;font-size:5.6px;letter-spacing:0.130px;color:#111;-webkit-text-stroke:0.12px #111">Covered</div>
<div class="a" style="left:62px;top:715px;width:1801px;height:1px;background:#b5d3ec"></div>
<div class="a" style="left:62px;top:729px;width:1801px;height:1px;background:#b5d3ec"></div>
<div class="a" style="left:62px;top:742px;width:1801px;height:1px;background:#b5d3ec"></div>
<div class="a" style="left:62px;top:756px;width:1801px;height:1px;background:#b5d3ec"></div>
<div class="a" style="left:1763.6px;top:693px;width:1.0px;height:63.60000000000002px;background:#b5d3ec"></div>
<div class="a" style="left:75px;top:762px;width:0;height:0;border-top:3.5px solid transparent;border-bottom:3.5px solid transparent;border-right:3.5px solid #cfcfcf"></div>
<div class="a" style="left:84px;top:760px;width:11px;height:11px;background:#0a85d6"></div>
<div class="t" style="left:-210.5px;width:600px;text-align:center;top:763.33px;font-size:6.4px;font-weight:bold;color:#fff">1</div>
<div class="a" style="left:99px;top:762px;width:0;height:0;border-top:3.5px solid transparent;border-bottom:3.5px solid transparent;border-left:3.5px solid #cfcfcf"></div>
<div class="a" style="left:109px;top:762px;width:0;height:0;border-top:3.5px solid transparent;border-bottom:3.5px solid transparent;border-left:3.5px solid #cfcfcf"></div>
<div class="a" style="left:113px;top:762px;width:1px;height:7px;background:#cfcfcf"></div>
<div class="a" style="left:68px;top:762px;width:0;height:0;border-top:3.5px solid transparent;border-bottom:3.5px solid transparent;border-right:3.5px solid #cfcfcf"></div>
<div class="a" style="left:66px;top:762px;width:1px;height:7px;background:#cfcfcf"></div>
<div class="t" style="left:1179.5px;width:600px;text-align:right;top:763.76px;font-size:5.9px;letter-spacing:-0.063px;color:#222;-webkit-text-stroke:0.1px #222">Page Size:</div>
<div class="a" style="left:1781.4px;top:761.3px;width:34.09999999999991px;height:9.700000000000045px;background:#fff;border:1px solid #666"></div>
<div class="t" style="left:1784px;top:763.76px;font-size:5.9px;letter-spacing:0.409px;color:#222">10</div>
<svg class="a" style="left:1801px;top:763.2px" width="10" height="7" viewBox="0 0 10 7"><path d="M1.2 1.2 L5 5.2 L8.8 1.2" fill="none" stroke="#111" stroke-width="2"/></svg>
<div class="t" style="left:1818px;top:763.76px;font-size:5.9px;letter-spacing:0.037px;color:#222;-webkit-text-stroke:0.1px #222">Page 1 of 1 [ 3 Records]</div>
<div class="a" style="left:52px;top:795px;width:1839px;height:166px;background:#fff;box-shadow:-1px 3px 7px rgba(0,0,0,.13)"></div>
<div class="a" style="left:53px;top:796px;width:1837px;height:26px;background:#0d2588;border-radius:3px 3px 0 0"></div>
<div class="t" style="left:62.9px;top:804.36px;font-size:7.9px;font-weight:bold;letter-spacing:-0.168px;color:#fff">Deductible Details</div>
<div class="a" style="left:61px;top:830.5px;width:1821px;height:105.5px;background:#fff;border:1px solid #a9cbe6"></div>
<div class="a" style="left:62px;top:831.0px;width:1801px;height:12.200000000000045px;background:linear-gradient(#0a6db5,#0a86d8)"></div>
<div class="a" style="left:62px;top:843.2px;width:1801px;height:23.0px;background:#eef1f4"></div>
<div class="a" style="left:1863px;top:831.0px;width:18px;height:104.0px;background:#f0f0f0"></div>
<div class="a" style="left:1868px;top:836.5px;width:0;height:0;border-left:4px solid transparent;border-right:4px solid transparent;border-bottom:4px solid #9e9e9e"></div>
<div class="a" style="left:1868px;top:924px;width:0;height:0;border-left:4px solid transparent;border-right:4px solid transparent;border-top:4px solid #9e9e9e"></div>
<div class="a" style="left:763.5px;top:831.0px;width:1.0px;height:12.200000000000045px;background:#3fa3f0"></div>
<div class="a" style="left:763.5px;top:843.2px;width:1.0px;height:91.79999999999995px;background:#b5d3ec"></div>
<div class="a" style="left:1463.75px;top:831.0px;width:1.0px;height:12.200000000000045px;background:#3fa3f0"></div>
<div class="a" style="left:1463.75px;top:843.2px;width:1.0px;height:91.79999999999995px;background:#b5d3ec"></div>
<div class="a" style="left:1538.75px;top:831.0px;width:1.0px;height:12.200000000000045px;background:#3fa3f0"></div>
<div class="a" style="left:1538.75px;top:843.2px;width:1.0px;height:91.79999999999995px;background:#b5d3ec"></div>
<div class="a" style="left:1613.75px;top:831.0px;width:1.0px;height:12.200000000000045px;background:#3fa3f0"></div>
<div class="a" style="left:1613.75px;top:843.2px;width:1.0px;height:91.79999999999995px;background:#b5d3ec"></div>
<div class="a" style="left:1688.75px;top:831.0px;width:1.0px;height:12.200000000000045px;background:#3fa3f0"></div>
<div class="a" style="left:1688.75px;top:843.2px;width:1.0px;height:91.79999999999995px;background:#b5d3ec"></div>
<div class="a" style="left:1763.75px;top:831.0px;width:1.0px;height:12.200000000000045px;background:#3fa3f0"></div>
<div class="a" style="left:1763.75px;top:843.2px;width:1.0px;height:91.79999999999995px;background:#b5d3ec"></div>
<div class="t" style="left:112.75px;width:600px;text-align:center;top:834.30px;font-size:6.2px;font-weight:bold;letter-spacing:-0.170px;color:#fff">Benefit</div>
<div class="t" style="left:813.625px;width:600px;text-align:center;top:834.30px;font-size:6.2px;font-weight:bold;letter-spacing:-0.270px;color:#fff">Sub Benefit</div>
<div class="t" style="left:1201.25px;width:600px;text-align:center;top:834.30px;font-size:6.2px;font-weight:bold;letter-spacing:-0.227px;color:#fff">Benefit Type</div>
<div class="t" style="left:1276.25px;width:600px;text-align:center;top:834.30px;font-size:6.2px;font-weight:bold;letter-spacing:-0.241px;color:#fff">Provider Type</div>
<div class="t" style="left:1351.25px;width:600px;text-align:center;top:834.30px;font-size:6.2px;font-weight:bold;letter-spacing:-0.231px;color:#fff">Provider Name</div>
<div class="t" style="left:1426.25px;width:600px;text-align:center;top:834.30px;font-size:6.2px;font-weight:bold;letter-spacing:-0.161px;color:#fff">Speciality</div>
<div class="t" style="left:1513.375px;width:600px;text-align:center;top:834.30px;font-size:6.2px;font-weight:bold;letter-spacing:-0.236px;color:#fff">Description</div>
<div class="a" style="left:65px;top:849.6px;width:681px;height:13.800000000000068px;background:#fff;border:1px solid #707070"></div>
<svg class="a" style="left:750px;top:847.2px" width="10" height="10" viewBox="0 0 10 10"><path d="M0.8 0.8 H9.2 L5.8 5 V8.6 L4.2 9.4 V5 Z" fill="none" stroke="#222" stroke-width="1.1" stroke-linejoin="round"/><path d="M4.3 5.5 L5.7 5.5 L5.6 8.8 L4.4 9.3 Z" fill="#555"/></svg>
<div class="a" style="left:766px;top:849.6px;width:680px;height:13.800000000000068px;background:#fff;border:1px solid #707070"></div>
<svg class="a" style="left:1450px;top:847.2px" width="10" height="10" viewBox="0 0 10 10"><path d="M0.8 0.8 H9.2 L5.8 5 V8.6 L4.2 9.4 V5 Z" fill="none" stroke="#222" stroke-width="1.1" stroke-linejoin="round"/><path d="M4.3 5.5 L5.7 5.5 L5.6 8.8 L4.4 9.3 Z" fill="#555"/></svg>
<div class="a" style="left:1466px;top:849.6px;width:54.5px;height:13.800000000000068px;background:#fff;border:1px solid #707070"></div>
<svg class="a" style="left:1525px;top:847.2px" width="10" height="10" viewBox="0 0 10 10"><path d="M0.8 0.8 H9.2 L5.8 5 V8.6 L4.2 9.4 V5 Z" fill="none" stroke="#222" stroke-width="1.1" stroke-linejoin="round"/><path d="M4.3 5.5 L5.7 5.5 L5.6 8.8 L4.4 9.3 Z" fill="#555"/></svg>
<div class="a" style="left:1541px;top:849.6px;width:54.5px;height:13.800000000000068px;background:#fff;border:1px solid #707070"></div>
<svg class="a" style="left:1600px;top:847.2px" width="10" height="10" viewBox="0 0 10 10"><path d="M0.8 0.8 H9.2 L5.8 5 V8.6 L4.2 9.4 V5 Z" fill="none" stroke="#222" stroke-width="1.1" stroke-linejoin="round"/><path d="M4.3 5.5 L5.7 5.5 L5.6 8.8 L4.4 9.3 Z" fill="#555"/></svg>
<div class="a" style="left:1616px;top:849.6px;width:55px;height:13.800000000000068px;background:#fff;border:1px solid #707070"></div>
<svg class="a" style="left:1675px;top:847.2px" width="10" height="10" viewBox="0 0 10 10"><path d="M0.8 0.8 H9.2 L5.8 5 V8.6 L4.2 9.4 V5 Z" fill="none" stroke="#222" stroke-width="1.1" stroke-linejoin="round"/><path d="M4.3 5.5 L5.7 5.5 L5.6 8.8 L4.4 9.3 Z" fill="#555"/></svg>
<div class="a" style="left:1691px;top:849.6px;width:55px;height:13.800000000000068px;background:#fff;border:1px solid #707070"></div>
<svg class="a" style="left:1750px;top:847.2px" width="10" height="10" viewBox="0 0 10 10"><path d="M0.8 0.8 H9.2 L5.8 5 V8.6 L4.2 9.4 V5 Z" fill="none" stroke="#222" stroke-width="1.1" stroke-linejoin="round"/><path d="M4.3 5.5 L5.7 5.5 L5.6 8.8 L4.4 9.3 Z" fill="#555"/></svg>
<div class="a" style="left:1766px;top:849.6px;width:80px;height:13.800000000000068px;background:#fff;border:1px solid #707070"></div>
<svg class="a" style="left:1850px;top:847.2px" width="10" height="10" viewBox="0 0 10 10"><path d="M0.8 0.8 H9.2 L5.8 5 V8.6 L4.2 9.4 V5 Z" fill="none" stroke="#222" stroke-width="1.1" stroke-linejoin="round"/><path d="M4.3 5.5 L5.7 5.5 L5.6 8.8 L4.4 9.3 Z" fill="#555"/></svg>
<div class="a" style="left:62px;top:866.2px;width:1801px;height:13.299999999999955px;background:#fff"></div>
<div class="t" style="left:64.2px;top:870.91px;font-size:5.6px;letter-spacing:0.030px;color:#111;-webkit-text-stroke:0.12px #111">21 - OUTPATIENT SERVICE</div>
<div class="t" style="left:765.7px;top:870.91px;font-size:5.6px;letter-spacing:0.105px;color:#111;-webkit-text-stroke:0.12px #111">2101 - CONSULTATION</div>
<div class="t" style="left:1465.95px;top:870.91px;font-size:5.6px;letter-spacing:0.293px;color:#111;-webkit-text-stroke:0.12px #111">Out Patient</div>
<div class="t" style="left:1540.95px;top:870.91px;font-size:5.6px;letter-spacing:0.487px;color:#111;-webkit-text-stroke:0.12px #111">All</div>
<div class="t" style="left:1615.95px;top:870.91px;font-size:5.6px;letter-spacing:0.487px;color:#111;-webkit-text-stroke:0.12px #111">All</div>
<div class="t" style="left:1765.95px;top:870.91px;font-size:5.6px;letter-spacing:0.233px;color:#111;-webkit-text-stroke:0.12px #111">20% of Claim Max. 30</div>
<div class="a" style="left:62px;top:879.5px;width:1801px;height:13.899999999999977px;background:#f3f3f3"></div>
<div class="t" style="left:64.2px;top:884.21px;font-size:5.6px;letter-spacing:0.054px;color:#111;-webkit-text-stroke:0.12px #111">27 - INPATIENT SERVICE</div>
<div class="t" style="left:1540.95px;top:884.21px;font-size:5.6px;letter-spacing:0.487px;color:#111;-webkit-text-stroke:0.12px #111">All</div>
<div class="t" style="left:1615.95px;top:884.21px;font-size:5.6px;letter-spacing:0.487px;color:#111;-webkit-text-stroke:0.12px #111">All</div>
<div class="t" style="left:1765.95px;top:884.21px;font-size:5.6px;letter-spacing:0.228px;color:#111;-webkit-text-stroke:0.12px #111">20% of Claim Max. 500</div>
<div class="a" style="left:62px;top:893.4px;width:1801px;height:14.0px;background:#fff"></div>
<div class="t" style="left:64.2px;top:898.11px;font-size:5.6px;letter-spacing:0.054px;color:#111;-webkit-text-stroke:0.12px #111">21 - EMERGENCY HEARING AND VISION AIDS</div>
<div class="t" style="left:1540.95px;top:898.11px;font-size:5.6px;letter-spacing:0.487px;color:#111;-webkit-text-stroke:0.12px #111">All</div>
<div class="t" style="left:1615.95px;top:898.11px;font-size:5.6px;letter-spacing:0.487px;color:#111;-webkit-text-stroke:0.12px #111">All</div>
<div class="t" style="left:1765.95px;top:898.11px;font-size:5.6px;letter-spacing:0.240px;color:#111;-webkit-text-stroke:0.12px #111">20% of Claim</div>
<div class="a" style="left:62px;top:907.4px;width:1801px;height:13.200000000000045px;background:#f3f3f3"></div>
<div class="t" style="left:64.2px;top:912.11px;font-size:5.6px;letter-spacing:0.065px;color:#111;-webkit-text-stroke:0.12px #111">18 - EMERGENCY DENTAL TREATMENT</div>
<div class="t" style="left:1540.95px;top:912.11px;font-size:5.6px;letter-spacing:0.487px;color:#111;-webkit-text-stroke:0.12px #111">All</div>
<div class="t" style="left:1615.95px;top:912.11px;font-size:5.6px;letter-spacing:0.487px;color:#111;-webkit-text-stroke:0.12px #111">All</div>
<div class="t" style="left:1765.95px;top:912.11px;font-size:5.6px;letter-spacing:0.240px;color:#111;-webkit-text-stroke:0.12px #111">20% of Claim</div>
<div class="a" style="left:62px;top:920.6px;width:1801px;height:14.399999999999977px;background:#fff"></div>
<div class="t" style="left:64.2px;top:925.31px;font-size:5.6px;letter-spacing:0.030px;color:#111;-webkit-text-stroke:0.12px #111">21 - OUTPATIENT SERVICE</div>
<div class="t" style="left:1465.95px;top:925.31px;font-size:5.6px;letter-spacing:0.293px;color:#111;-webkit-text-stroke:0.12px #111">Out Patient</div>
<div class="t" style="left:1540.95px;top:925.31px;font-size:5.6px;letter-spacing:0.487px;color:#111;-webkit-text-stroke:0.12px #111">All</div>
<div class="t" style="left:1615.95px;top:925.31px;font-size:5.6px;letter-spacing:0.487px;color:#111;-webkit-text-stroke:0.12px #111">All</div>
<div class="t" style="left:1765.95px;top:925.31px;font-size:5.6px;letter-spacing:0.201px;color:#111;-webkit-text-stroke:0.12px #111">0% of Claim</div>
<div class="a" style="left:62px;top:866px;width:1801px;height:1px;background:#b5d3ec"></div>
<div class="a" style="left:62px;top:879px;width:1801px;height:1px;background:#b5d3ec"></div>
<div class="a" style="left:62px;top:893px;width:1801px;height:1px;background:#b5d3ec"></div>
<div class="a" style="left:62px;top:907px;width:1801px;height:1px;background:#b5d3ec"></div>
<div class="a" style="left:62px;top:920px;width:1801px;height:1px;background:#b5d3ec"></div>
<div class="a" style="left:62px;top:935px;width:1801px;height:1px;background:#b5d3ec"></div>
<div class="a" style="left:763.5px;top:843.2px;width:1.0px;height:91.79999999999995px;background:#b5d3ec"></div>
<div class="a" style="left:1463.75px;top:843.2px;width:1.0px;height:91.79999999999995px;background:#b5d3ec"></div>
<div class="a" style="left:1538.75px;top:843.2px;width:1.0px;height:91.79999999999995px;background:#b5d3ec"></div>
<div class="a" style="left:1613.75px;top:843.2px;width:1.0px;height:91.79999999999995px;background:#b5d3ec"></div>
<div class="a" style="left:1688.75px;top:843.2px;width:1.0px;height:91.79999999999995px;background:#b5d3ec"></div>
<div class="a" style="left:1763.75px;top:843.2px;width:1.0px;height:91.79999999999995px;background:#b5d3ec"></div>
<div class="a" style="left:75px;top:940px;width:0;height:0;border-top:3.5px solid transparent;border-bottom:3.5px solid transparent;border-right:3.5px solid #cfcfcf"></div>
<div class="a" style="left:84px;top:938px;width:11px;height:11px;background:#0a85d6"></div>
<div class="t" style="left:-210.5px;width:600px;text-align:center;top:941.33px;font-size:6.4px;font-weight:bold;color:#fff">1</div>
<div class="a" style="left:99px;top:940px;width:0;height:0;border-top:3.5px solid transparent;border-bottom:3.5px solid transparent;border-left:3.5px solid #cfcfcf"></div>
<div class="a" style="left:109px;top:940px;width:0;height:0;border-top:3.5px solid transparent;border-bottom:3.5px solid transparent;border-left:3.5px solid #cfcfcf"></div>
<div class="a" style="left:113px;top:940px;width:1px;height:7px;background:#cfcfcf"></div>
<div class="a" style="left:68px;top:940px;width:0;height:0;border-top:3.5px solid transparent;border-bottom:3.5px solid transparent;border-right:3.5px solid #cfcfcf"></div>
<div class="a" style="left:66px;top:940px;width:1px;height:7px;background:#cfcfcf"></div>
<div class="t" style="left:1179.5px;width:600px;text-align:right;top:941.76px;font-size:5.9px;letter-spacing:-0.063px;color:#222;-webkit-text-stroke:0.1px #222">Page Size:</div>
<div class="a" style="left:1781.4px;top:939.3px;width:34.09999999999991px;height:9.700000000000045px;background:#fff;border:1px solid #666"></div>
<div class="t" style="left:1784px;top:941.76px;font-size:5.9px;letter-spacing:0.409px;color:#222">10</div>
<svg class="a" style="left:1801px;top:941.2px" width="10" height="7" viewBox="0 0 10 7"><path d="M1.2 1.2 L5 5.2 L8.8 1.2" fill="none" stroke="#111" stroke-width="2"/></svg>
<div class="t" style="left:1818px;top:941.76px;font-size:5.9px;letter-spacing:0.037px;color:#222;-webkit-text-stroke:0.1px #222">Page 1 of 1 [ 5 Records]</div>
<div class="a" style="left:52px;top:973px;width:1839px;height:127px;background:#fff;box-shadow:-1px 3px 7px rgba(0,0,0,.13)"></div>
<div class="a" style="left:53px;top:974px;width:1837px;height:25px;background:#0d2588;border-radius:3px 3px 0 0"></div>
<div class="t" style="left:62.9px;top:982.36px;font-size:7.9px;font-weight:bold;letter-spacing:-0.206px;color:#fff">Pre Approval Limits</div>
<div class="a" style="left:61px;top:1007.5px;width:1821px;height:37.5px;background:#fff;border:1px solid #a9cbe6"></div>
<div class="a" style="left:62px;top:1008.0px;width:1801px;height:13.0px;background:linear-gradient(#0a6db5,#0a86d8)"></div>
<div class="a" style="left:62px;top:1021px;width:1801px;height:23px;background:#eef1f4"></div>
<div class="a" style="left:1863px;top:1008.0px;width:18px;height:36.0px;background:#f0f0f0"></div>
<div class="a" style="left:1868px;top:1013.5px;width:0;height:0;border-left:4px solid transparent;border-right:4px solid transparent;border-bottom:4px solid #9e9e9e"></div>
<div class="a" style="left:920px;top:1008.0px;width:1px;height:13.0px;background:#3fa3f0"></div>
<div class="a" style="left:920px;top:1021px;width:1px;height:23px;background:#b5d3ec"></div>
<div class="a" style="left:1778px;top:1008.0px;width:1px;height:13.0px;background:#3fa3f0"></div>
<div class="a" style="left:1778px;top:1021px;width:1px;height:23px;background:#b5d3ec"></div>
<div class="a" style="left:1813px;top:1008.0px;width:1px;height:13.0px;background:#3fa3f0"></div>
<div class="a" style="left:1813px;top:1021px;width:1px;height:23px;background:#b5d3ec"></div>
<div class="t" style="left:191.0px;width:600px;text-align:center;top:1011.30px;font-size:6.2px;font-weight:bold;letter-spacing:-0.170px;color:#fff">Benefit</div>
<div class="t" style="left:1049.0px;width:600px;text-align:center;top:1011.30px;font-size:6.2px;font-weight:bold;letter-spacing:-0.077px;color:#fff">Network</div>
<div class="t" style="left:1495.5px;width:600px;text-align:center;top:1011.30px;font-size:6.2px;font-weight:bold;letter-spacing:-0.156px;color:#fff">Unlimited</div>
<div class="t" style="left:1262px;width:600px;text-align:right;top:1011.30px;font-size:6.2px;font-weight:bold;letter-spacing:0.171px;color:#fff">Limit</div>
<div class="a" style="left:65px;top:1027.4px;width:838px;height:13.799999999999955px;background:#fff;border:1px solid #707070"></div>
<svg class="a" style="left:907px;top:1025px" width="10" height="10" viewBox="0 0 10 10"><path d="M0.8 0.8 H9.2 L5.8 5 V8.6 L4.2 9.4 V5 Z" fill="none" stroke="#222" stroke-width="1.1" stroke-linejoin="round"/><path d="M4.3 5.5 L5.7 5.5 L5.6 8.8 L4.4 9.3 Z" fill="#555"/></svg>
<div class="a" style="left:923px;top:1027.4px;width:838px;height:13.799999999999955px;background:#fff;border:1px solid #707070"></div>
<svg class="a" style="left:1765px;top:1025px" width="10" height="10" viewBox="0 0 10 10"><path d="M0.8 0.8 H9.2 L5.8 5 V8.6 L4.2 9.4 V5 Z" fill="none" stroke="#222" stroke-width="1.1" stroke-linejoin="round"/><path d="M4.3 5.5 L5.7 5.5 L5.6 8.8 L4.4 9.3 Z" fill="#555"/></svg>
<div class="a" style="left:1792.5px;top:1028.5px;width:5.0px;height:5.0px;background:#fff;border:1px solid #bbb"></div>
<div class="a" style="left:1816px;top:1027.4px;width:30px;height:13.799999999999955px;background:#fff;border:1px solid #707070"></div>
<svg class="a" style="left:1850px;top:1025px" width="10" height="10" viewBox="0 0 10 10"><path d="M0.8 0.8 H9.2 L5.8 5 V8.6 L4.2 9.4 V5 Z" fill="none" stroke="#222" stroke-width="1.1" stroke-linejoin="round"/><path d="M4.3 5.5 L5.7 5.5 L5.6 8.8 L4.4 9.3 Z" fill="#555"/></svg>
<div class="a" style="left:1903px;top:121px;width:17px;height:919px;background:#f1f1f1;border-left:1px solid #e8e8e8"></div>
<div class="a" style="left:1907px;top:129px;width:0;height:0;border-left:4px solid transparent;border-right:4px solid transparent;border-bottom:4px solid #a3a3a3"></div>
<div class="a" style="left:1905px;top:138px;width:13px;height:804px;background:#c1c1c1"></div>
<div class="a" style="left:1907px;top:1029px;width:0;height:0;border-left:4px solid transparent;border-right:4px solid transparent;border-top:4px solid #505050"></div>
<!--/APP-->
<!--TASK-->
<div class="a" style="left:0;top:1040px;width:1920px;height:40px;background:linear-gradient(90deg,#1f333b 0%,#20333d 30%,#1e3040 55%,#1b2842 80%,#1b2741 100%)"></div>
<svg class="a" style="left:16px;top:1052px" width="17" height="17" viewBox="0 0 17 17"><path d="M0 2.4 L7 1.4 V8 H0 Z M8 1.2 L17 0 V8 H8 Z M0 9 H7 V15.6 L0 14.6 Z M8 9 H17 V17 L8 15.8 Z" fill="#fff"/></svg>
<div class="a" style="left:48px;top:1040px;width:288px;height:40px;background:#f0f0f0;border-top:1px solid #d0d0d0"></div>
<svg class="a" style="left:60px;top:1052px" width="17" height="17" viewBox="0 0 17 17"><circle cx="10" cy="7" r="5.6" fill="none" stroke="#222" stroke-width="1.2"/><path d="M6 11 L0.8 16.2" stroke="#222" stroke-width="1.3"/></svg>
<div class="t" style="left:88px;top:1052.7px;font-size:14.5px;color:#1a1a1a">Type here to search</div>
<svg class="a" style="left:256px;top:1040px" width="80" height="40" viewBox="0 0 80 40"><defs><linearGradient id="hill" x1="0" y1="0" x2="0" y2="1"><stop offset="0" stop-color="#e8eefa"/><stop offset=".5" stop-color="#8fb6ec"/><stop offset="1" stop-color="#dfe7f6"/></linearGradient></defs><path d="M4 40 C12 28 20 16 30 13.5 C38 12 46 15 54 16 C62 15 72 13 80 13.5 V40 Z" fill="url(#hill)"/><path d="M10 40 C20 34 32 30 46 28.5 C58 27.5 70 22 80 19 V40 Z" fill="#e2e6f2"/><g stroke="#6b4c60" stroke-width="1.1" fill="none"><path d="M13 40 L42 29 L62 33 L80 35"/><path d="M51 40 L68 32 L80 27"/><path d="M68 23 L80 26"/></g><g stroke="#3c4f9e" stroke-width="1.1" fill="none" stroke-linecap="round"><path d="M32 31 V23 M29 21 L32 24 L35 20 M37 29 V21 M35 19 L37 22 L39 18 M40 28 V22 M42 20 L40 23"/><path d="M58 35 L57 24 M54 22 L57 25 L58 18 M64 32 V20 M62 17 L64 21 L67 16 M60 21 L62 24"/></g><ellipse cx="28" cy="32.5" rx="2" ry="1.3" fill="#3c4f9e"/><ellipse cx="73" cy="30" rx="2.4" ry="1.6" fill="#3c4f9e"/></svg>
<!-- task view -->
<svg class="a" style="left:352px;top:1052px" width="17" height="15" viewBox="0 0 17 15"><path d="M0.5 1 H11 M0.5 14 H11 M2 3.5 H9.5 V11.5 H2 Z" fill="none" stroke="#fff" stroke-width="1.1"/><path d="M14.5 0.5 V3 M14.5 12 V14.5" stroke="#fff" stroke-width="1.2"/><rect x="13" y="4.5" width="3" height="6" fill="#fff"/></svg>
<!-- explorer -->
<svg class="a" style="left:400px;top:1051px" width="22" height="18" viewBox="0 0 22 18"><path d="M0 1.5 H8 L10 3.5 H22 V18 H0 Z" fill="#e9a722"/><rect x="0" y="4.5" width="22" height="13.5" fill="#ffd15c"/><path d="M4 18 V10 H18 V18 H14.5 V13 H7.5 V18 Z" fill="#3a8fd9"/></svg>
<!-- calculator -->
<svg class="a" style="left:451px;top:1048px" width="18" height="24" viewBox="0 0 18 24"><rect x="0" y="0" width="18" height="24" rx="1" fill="#5f6b73"/><rect x="2" y="2" width="14" height="4" fill="#5fd0f5"/><g fill="#d7dde2"><rect x="2" y="8" width="3.5" height="3.5"/><rect x="7" y="8" width="3.5" height="3.5"/><rect x="12" y="8" width="3.5" height="3.5"/><rect x="2" y="13" width="3.5" height="3.5"/><rect x="7" y="13" width="3.5" height="3.5"/><rect x="2" y="18" width="3.5" height="3.5"/><rect x="7" y="18" width="3.5" height="3.5"/></g><rect x="12" y="13" width="3.5" height="8.5" fill="#1f4ea0"/></svg>
<!-- whatsapp -->
<svg class="a" style="left:497px;top:1048px" width="25" height="25" viewBox="0 0 25 25"><path d="M2.2 23 L3.8 17.6 A10.6 10.6 0 1 1 7.6 21.3 Z" fill="none" stroke="#25d366" stroke-width="1.9"/><path d="M8.6 7.2 C8 8 7.8 9.5 9 11.8 C10.3 14.2 12.5 16.3 15 17.3 C16.6 17.9 17.6 17.2 18 16.3 L16.2 14.6 L14.7 15.3 C13.2 14.6 11.3 12.7 10.6 11.2 L11.3 9.7 L9.8 7.6 Z" fill="#25d366"/></svg>
<!-- chrome active -->
<div class="a" style="left:534px;top:1040px;width:44px;height:40px;background:#3a4a52"></div>
<div class="a" style="left:534px;top:1078px;width:44px;height:2px;background:#76b9ed"></div>
<div class="a" style="left:578px;top:1040px;width:2px;height:40px;background:#2b3a42"></div>
<svg class="a" style="left:546px;top:1048px" width="25" height="25" viewBox="0 0 25 25"><path d="M12.5 12.5 L2.11 6.5 A12 12 0 0 1 22.89 6.5 Z" fill="#ea4335"/><path d="M12.5 12.5 L22.89 6.5 A12 12 0 0 1 12.5 24.5 Z" fill="#fbbc04"/><path d="M12.5 12.5 L12.5 24.5 A12 12 0 0 1 2.11 6.5 Z" fill="#34a853"/><path d="M12.5 7 L22.89 6.5 L17.3 15.3 Z" fill="#ea4335"/><path d="M17.3 15.3 L12.5 24.5 L7.7 15.3 Z" fill="#fbbc04"/><path d="M7.7 15.3 L2.11 6.5 L12.5 7 Z" fill="#34a853"/><circle cx="12.5" cy="12.5" r="5.6" fill="#fff"/><circle cx="12.5" cy="12.5" r="4.4" fill="#1a73e8"/></svg><div class="a" style="left:560px;top:1062px;width:12px;height:12px;border-radius:50%;background:#3d4a55"></div><div class="t" style="left:563.5px;top:1064.5px;font-size:8px;color:#ddd">j</div>
<!-- snipping -->
<svg class="a" style="left:595px;top:1048px" width="25" height="24" viewBox="0 0 25 24"><g transform="rotate(-22 12 10)"><ellipse cx="12" cy="11.5" rx="10.5" ry="6.5" fill="#9a9a9a"/><ellipse cx="12.5" cy="9.5" rx="10.5" ry="6.5" fill="#fafafa" stroke="#d83a3a" stroke-width="1"/></g><path d="M8 4 L15 14 M16 4.5 L12 13" stroke="#8a8a8a" stroke-width="0.9"/><path d="M14.5 14 C12.5 17 14 21.5 16.5 21 C18.5 20.5 17 16.5 15.5 14.5 M16 14 C19 14 23.5 16 22.5 18 C21.5 20 17.5 17 16 15" fill="none" stroke="#1e90e0" stroke-width="1.5"/></svg>
<!-- vision id -->
<div class="a" style="left:644px;top:1048px;width:24px;height:24px;background:#fff"></div>
<svg class="a" style="left:644px;top:1048px" width="24" height="24" viewBox="0 0 24 24"><ellipse cx="12" cy="9" rx="8" ry="5" fill="#eef3e6"/><path d="M7 5 L12 15 L17 5 L15.3 5 L12 11.8 L8.7 5 Z" fill="#1d2f6e"/><path d="M9.6 5.2 H14.4 L12 9.2 Z" fill="#8cc63f"/><text x="12" y="19.3" font-family="Liberation Sans" font-weight="bold" font-size="4.6" fill="#222" text-anchor="middle" letter-spacing="-0.1">VISION ID</text><rect x="6" y="20.5" width="12" height="0.7" fill="#888"/></svg>
<!-- edge -->
<svg class="a" style="left:692px;top:1048px" width="25" height="25" viewBox="0 0 25 25"><defs><linearGradient id="ed1" x1="0" y1="0" x2="1" y2="0"><stop offset="0" stop-color="#1b9de2"/><stop offset=".55" stop-color="#2fc1c0"/><stop offset="1" stop-color="#5fd66a"/></linearGradient><linearGradient id="ed2" x1="0" y1="0" x2="1" y2="1"><stop offset="0" stop-color="#1a8ad8"/><stop offset="1" stop-color="#0c56a8"/></linearGradient></defs><path d="M1 12 C1 5 6 0.5 12.5 0.5 C19.5 0.5 24.5 6 24.5 12.5 C24.5 16.5 21.5 18.5 18 18.5 C15 18.5 13 17 13.5 14.5 C14 12.5 16 12 16.5 11 C14 8 9 7.5 5.5 9.5 C3 11 1.5 13 1 12 Z" fill="url(#ed1)"/><path d="M1 12 C1.5 13 3 11 5.5 9.5 C9 7.5 14 8 16.5 11 C13 9.5 8.5 10.5 7.5 14 C6.5 18 9.5 22.5 14 23.5 C12 24.2 9 24.3 6 23 C2.5 21 0.8 16.5 1 12 Z" fill="url(#ed2)"/><path d="M7.5 14 C8.5 10.5 13 9.5 16.5 11 C16 12 14 12.5 13.5 14.5 C13 17 15 18.5 18 18.5 C21.5 18.5 24.5 16.5 24.5 12.5 C24.5 19 19 24 12.5 24 C10 24 8 22.5 7.5 20 C7 18 7 16 7.5 14 Z" fill="#1565c0" opacity=".85"/></svg>
<!-- word -->
<svg class="a" style="left:742px;top:1048px" width="23" height="24" viewBox="0 0 23 24"><rect x="1" y="1" width="20" height="22" fill="#f4f8fd" stroke="#2b5ca8" stroke-width="1"/><path d="M1.5 1.5 H20.5 V13 H1.5 Z" fill="#d6e6f8"/><text x="10.5" y="14.5" font-family="Liberation Sans" font-weight="bold" font-size="13.5" fill="#1b4fb0" text-anchor="middle">W</text><path d="M13 16 L22 17.5 L20.5 22.5 L12 21 Z" fill="#fff" stroke="#9ab" stroke-width=".5"/></svg>
<div class="a" style="left:734px;top:1078px;width:40px;height:2px;background:#76b9ed"></div>
<!-- excel -->
<svg class="a" style="left:791px;top:1048px" width="23" height="24" viewBox="0 0 23 24"><rect x="1" y="1" width="19" height="22" fill="#e6f2e6" stroke="#2e8b3e" stroke-width="1"/><text x="10.5" y="15" font-family="Liberation Sans" font-weight="bold" font-style="italic" font-size="13" fill="#2e8b3e" text-anchor="middle">X</text><path d="M11 14 L22 16 L20 23 L9 21 Z" fill="#f4f4f4" stroke="#8a8" stroke-width=".6"/></svg>
<svg class="a" style="left:839px;top:1048px" width="25" height="25" viewBox="0 0 25 25"><path d="M12.5 12.5 L2.11 6.5 A12 12 0 0 1 22.89 6.5 Z" fill="#ea4335"/><path d="M12.5 12.5 L22.89 6.5 A12 12 0 0 1 12.5 24.5 Z" fill="#fbbc04"/><path d="M12.5 12.5 L12.5 24.5 A12 12 0 0 1 2.11 6.5 Z" fill="#34a853"/><path d="M12.5 7 L22.89 6.5 L17.3 15.3 Z" fill="#ea4335"/><path d="M17.3 15.3 L12.5 24.5 L7.7 15.3 Z" fill="#fbbc04"/><path d="M7.7 15.3 L2.11 6.5 L12.5 7 Z" fill="#34a853"/><circle cx="12.5" cy="12.5" r="5.6" fill="#fff"/><circle cx="12.5" cy="12.5" r="4.4" fill="#1a73e8"/></svg>
<svg class="a" style="left:888px;top:1048px" width="25" height="25" viewBox="0 0 25 25"><path d="M12.5 12.5 L2.11 6.5 A12 12 0 0 1 22.89 6.5 Z" fill="#ea4335"/><path d="M12.5 12.5 L22.89 6.5 A12 12 0 0 1 12.5 24.5 Z" fill="#fbbc04"/><path d="M12.5 12.5 L12.5 24.5 A12 12 0 0 1 2.11 6.5 Z" fill="#34a853"/><path d="M12.5 7 L22.89 6.5 L17.3 15.3 Z" fill="#ea4335"/><path d="M17.3 15.3 L12.5 24.5 L7.7 15.3 Z" fill="#fbbc04"/><path d="M7.7 15.3 L2.11 6.5 L12.5 7 Z" fill="#34a853"/><circle cx="12.5" cy="12.5" r="5.6" fill="#fff"/><circle cx="12.5" cy="12.5" r="4.4" fill="#1a73e8"/></svg><div class="a" style="left:902px;top:1062px;width:12px;height:12px;border-radius:50%;background:#5a3a2a"></div><div class="t" style="left:905.5px;top:1064.5px;font-size:8px;color:#ddd">P</div>
<!-- photos -->
<svg class="a" style="left:938px;top:1048px" width="23" height="23" viewBox="0 0 23 23"><defs><linearGradient id="ph" x1="0" y1="0" x2="0" y2="1"><stop offset="0" stop-color="#1976d2"/><stop offset="1" stop-color="#2aa7f5"/></linearGradient></defs><rect x="0" y="0" width="23" height="23" rx="2" fill="url(#ph)"/><path d="M0 19 L8 9 L15 17 L18 14 L23 19 V23 H0 Z" fill="#7fd3ff"/><path d="M0 23 L10 12 L23 23 Z" fill="#4fc3f7"/><circle cx="17" cy="5.5" r="2" fill="#fff"/></svg>
<div class="a" style="left:881px;top:1078px;width:40px;height:2px;background:#76b9ed"></div>
<div class="a" style="left:930px;top:1078px;width:40px;height:2px;background:#76b9ed"></div>
<!-- tray -->
<div class="a" style="left:1540px;top:1050px;width:20px;height:20px;border-radius:50%;background:linear-gradient(135deg,#f7c229,#f06b10)"></div>
<div class="t" style="left:1570px;top:1053px;font-size:14.2px;letter-spacing:-0.4px;color:#fff">21°C&nbsp; Sunny</div>
<svg class="a" style="left:1670px;top:1055px" width="14" height="9" viewBox="0 0 14 9"><path d="M1 7.5 L7 1.5 L13 7.5" fill="none" stroke="#fff" stroke-width="1.2"/></svg>
<svg class="a" style="left:1693px;top:1053px" width="16" height="14" viewBox="0 0 16 14"><path d="M0 3 L3 0 H8 V2 H15 V12 H0 Z" fill="#f07a14"/><rect x="6" y="5" width="8" height="5" fill="none" stroke="#fde" stroke-width="1"/><path d="M10 10 V13" stroke="#fde" stroke-width="1"/></svg>
<svg class="a" style="left:1720px;top:1053px" width="14" height="15" viewBox="0 0 14 15"><rect x="2.5" y="1.5" width="11" height="8" fill="none" stroke="#fff" stroke-width="1"/><rect x="0.5" y="0.5" width="3" height="4" fill="#1b2841" stroke="#fff" stroke-width="1"/><path d="M8 9.5 V13.5 M4.5 13.5 H11.5" stroke="#fff" stroke-width="1"/></svg>
<svg class="a" style="left:1741px;top:1053px" width="17" height="15" viewBox="0 0 17 15"><path d="M0.8 5 H3.5 L7.5 1.2 V13.8 L3.5 10 H0.8 Z" fill="none" stroke="#fff" stroke-width="1"/><path d="M10 5 A3 3 0 0 1 10 10 M12 3.2 A5.5 5.5 0 0 1 12 11.8 M14 1.2 A8 8 0 0 1 14 13.8" fill="none" stroke="#fff" stroke-width="1"/></svg>
<div class="t" style="left:1767px;top:1054px;font-size:11.6px;letter-spacing:-0.4px;color:#fff">ENG</div>
<div class="t" style="left:1802px;width:60px;text-align:center;top:1045.5px;font-size:11.8px;letter-spacing:-0.25px;color:#fff">5:01 PM</div>
<div class="t" style="left:1797px;width:70px;text-align:center;top:1063px;font-size:11.8px;letter-spacing:-0.05px;color:#fff">22/02/2024</div>
<svg class="a" style="left:1879px;top:1052px" width="17" height="15" viewBox="0 0 17 15"><path d="M0.5 0.5 H16.5 V11.5 H6 L3 14.5 V11.5 H0.5 Z" fill="#fff"/><path d="M3 3.5 H13.5 M3 6 H13.5 M3 8.5 H10" stroke="#1b2841" stroke-width="1"/></svg>
<div class="a" style="left:1887px;top:1060px;width:15.5px;height:15.5px;border-radius:50%;background:#2c2c2c;border:1.2px solid #8a8a8a"></div>
<div class="t" style="left:1891.6px;top:1063.6px;font-size:9px;font-weight:bold;color:#fff">1</div>
<div class="a" style="left:1915px;top:1040px;width:1px;height:40px;background:#5a6a80"></div>
<!--/TASK-->
</body></html>
